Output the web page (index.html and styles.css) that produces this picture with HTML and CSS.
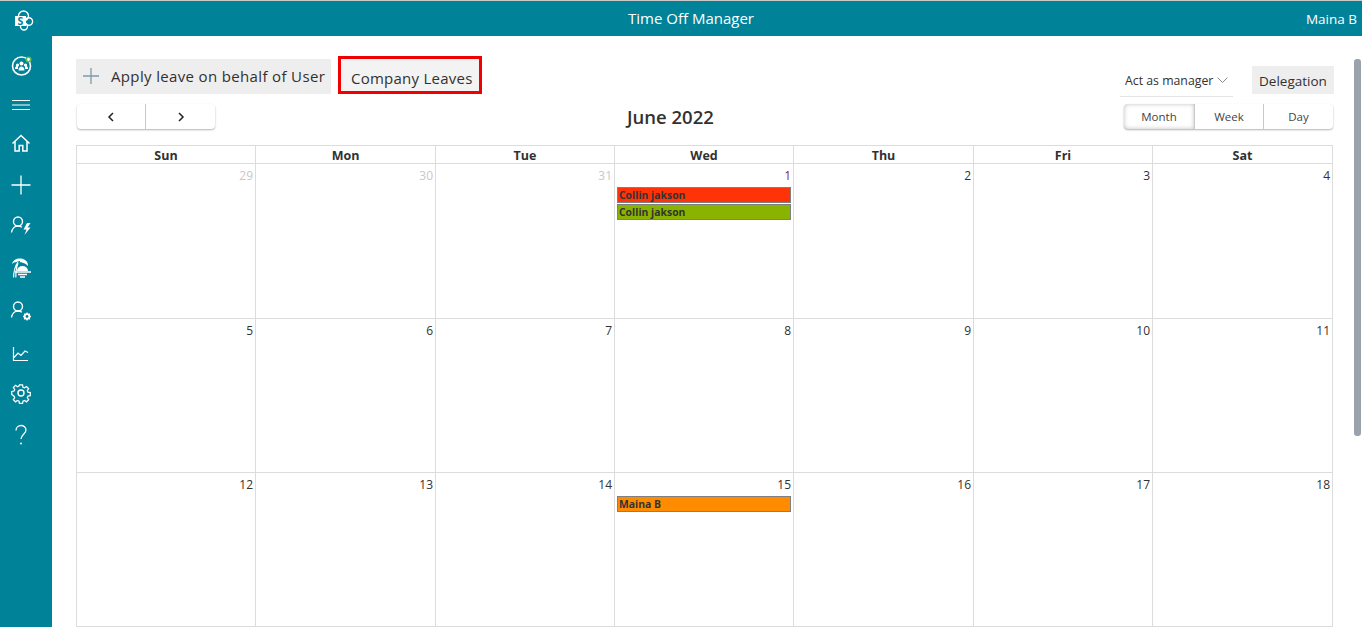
FILE: index.html
```html
<!DOCTYPE html>
<html lang="en">
<head>
    <meta charset="UTF-8">
    <meta name="viewport" content="width=device-width, initial-scale=1.0">
    <title>Time Off Manager</title>
    <link rel="stylesheet" href="styles.css">
</head>
<body>
    <header class="topbar">
        <svg class="logo" width="20" height="22" viewBox="0 0 20 22" fill="none" stroke="#fff" stroke-width="1.4">
            <circle cx="9.500" cy="6" r="5"/>
            <circle cx="14.800" cy="11.500" r="3.800"/>
            <circle cx="10" cy="16.500" r="3.500"/>
            <rect x="1" y="6" width="11" height="10" fill="#fff" stroke="none"/>
            <text x="6.500" y="14.500" class="logo-letter">S</text>
        </svg>
        <div class="app-title">Time Off Manager</div>
        <div class="user-name">Maina B</div>
    </header>

    <div class="main">
        <nav class="sidebar">
            <svg class="nav-icon" width="24" height="24" viewBox="0 0 24 24" fill="none" stroke="#fff">
                <circle cx="12.500" cy="13" r="9" stroke-width="1.600"/>
                <circle cx="12.500" cy="10.500" r="2" fill="#fff" stroke="none"/>
                <circle cx="8.500" cy="12" r="1.600" fill="#fff" stroke="none"/>
                <circle cx="16.500" cy="12" r="1.600" fill="#fff" stroke="none"/>
                <path d="M9.500 17.500c0-5.500 6-5.500 6 0z" fill="#fff" stroke="none"/>
                <path d="M6 16c0-2.500 1-3 3-3v3zM19 16c0-2.500-1-3-3-3v3z" fill="#fff" stroke="none"/>
                <circle cx="19.500" cy="6.500" r="2.200" stroke="#5cc04a" stroke-width="1.600" fill="#fff"/>
            </svg>
            <svg class="nav-icon" width="20" height="20" viewBox="0 0 20 20" stroke="#fff" stroke-width="1">
                <path d="M1 5.500h18M1 10h18M1 14.500h18"/>
            </svg>
            <svg class="nav-icon" width="20" height="20" viewBox="0 0 20 20" fill="none" stroke="#fff" stroke-width="1.500">
                <path d="M1.500 10.500L10 2.500l8.500 8M4 8.500v9.500h4.200v-5.500h3.600V18H16V8.500"/>
            </svg>
            <svg class="nav-icon" width="22" height="22" viewBox="0 0 22 22" stroke="#fff" stroke-width="1.300">
                <path d="M1.500 11h19M11 1.500v19"/>
            </svg>
            <svg class="nav-icon" width="22" height="22" viewBox="0 0 22 22" fill="none" stroke="#fff" stroke-width="1.400">
                <circle cx="8" cy="6.500" r="4.500"/>
                <path d="M1.500 17.500c.5-3.500 3-6.500 6.500-6.500 1.500 0 2.800.4 3.800 1.200"/>
                <path d="M17 8l-3.500 6.500h3l-2 5.500 6-7.500h-3L20.500 8z" fill="#fff" stroke="none"/>
            </svg>
            <svg class="nav-icon" width="22" height="22" viewBox="0 0 22 22" fill="none" stroke="#fff" stroke-width="1.300">
                <path d="M2 7C3 2 10 0 15 3c2 1 3 3 3 6-3-3-6-4-9-4S4 5 2 7z" fill="#fff" stroke="none"/>
                <path d="M5 7c1-1.500 3-2.500 5-2.500" stroke="#008299" stroke-width="1"/>
                <path d="M8 5C5 9 3.800 14 3.500 20.500M8 6c-1.500 4-2.200 9-2.200 14.500" stroke-width="1.200"/>
                <path d="M7 14a5.500 5 0 0 1 11 0z" fill="#fff" stroke="none"/>
                <path d="M5 15h16" stroke-width="1.500"/>
                <path d="M8 17.500h9M10 20h5" stroke-width="1.300"/>
            </svg>
            <svg class="nav-icon" width="22" height="22" viewBox="0 0 22 22" fill="none" stroke="#fff">
                <circle cx="8" cy="6.500" r="4.500" stroke-width="1.400"/>
                <path d="M1.500 17.500c.5-3.500 3-6.500 6.500-6.500 1.500 0 2.800.4 3.800 1.200" stroke-width="1.400"/>
                <circle cx="17" cy="16.500" r="2.300" stroke-width="1.800"/>
                <path d="M17 12.500v1.500M17 19v1.500M13 16.500h1.500M19.500 16.500H21M14.200 13.700l1 1M18.800 18.300l1 1M14.200 19.300l1-1M18.800 14.700l1-1" stroke-width="1.300"/>
            </svg>
            <svg class="nav-icon" width="20" height="20" viewBox="0 0 20 20" fill="none" stroke="#fff" stroke-width="1.200">
                <path d="M2.500 4v13.500H17"/>
                <path d="M3 14.500l4-4.500 3 2.500 4-4.500 3 1.500"/>
            </svg>
            <svg class="nav-icon" width="22" height="22" viewBox="0 0 22 22" fill="none" stroke="#fff" stroke-width="1.400">
                <circle cx="11" cy="11" r="3"/>
                <path d="M9.300 2h3.400l.5 2.600 1.700.7 2.200-1.500 2.400 2.400-1.500 2.200.7 1.700 2.600.5v3.400l-2.600.5-.7 1.700 1.500 2.200-2.400 2.400-2.200-1.500-1.700.7-.5 2.600H9.300l-.5-2.600-1.700-.7-2.200 1.500-2.400-2.400 1.500-2.200-.7-1.700L.7 12.700V9.300l2.600-.5.700-1.700-1.500-2.200 2.400-2.400 2.200 1.500 1.700-.7z" transform="translate(1.100 1.100) scale(.9)"/>
            </svg>
            <svg class="nav-icon" width="20" height="22" viewBox="0 0 20 22" fill="none" stroke="#fff" stroke-width="1.300">
                <path d="M5 6.500C5 3.500 7.300 1.500 10 1.500s5 2 5 4.500c0 4-5 4.500-5 9"/>
                <circle cx="10" cy="19.500" r="1" fill="#fff" stroke="none"/>
            </svg>
        </nav>

        <section class="content">
            <div class="toolbar">
                <div class="toolbar-left">
                    <button class="btn btn-apply">
                        <svg width="18" height="18" viewBox="0 0 18 18" stroke="#7d9aab" stroke-width="1.300">
                            <path d="M1 9h16M9 1v16"/>
                        </svg>
                        <span>Apply leave on behalf of User</span>
                    </button>
                    <button class="btn btn-company">Company Leaves</button>
                </div>
                <div class="toolbar-right">
                    <div class="role-select">
                        <span>Act as manager</span>
                        <svg width="11" height="6" viewBox="0 0 11 6" fill="none" stroke="#8a8886" stroke-width="1">
                            <path d="M.5.500l5 5 5-5"/>
                        </svg>
                    </div>
                    <button class="btn btn-delegation">Delegation</button>
                </div>
            </div>

            <div class="cal-head">
                <div class="btn-group nav-group">
                    <button>
                        <svg width="8" height="10" viewBox="0 0 8 10" fill="none" stroke="#222" stroke-width="1.500"><path d="M6 1L2 5l4 4"/></svg>
                    </button>
                    <button>
                        <svg width="8" height="10" viewBox="0 0 8 10" fill="none" stroke="#222" stroke-width="1.500"><path d="M2 1l4 4-4 4"/></svg>
                    </button>
                </div>
                <h2 class="cal-title">June 2022</h2>
                <div class="btn-group view-group">
                    <button class="active">Month</button>
                    <button>Week</button>
                    <button>Day</button>
                </div>
            </div>

            <div class="calendar">
                <div class="day-name">Sun</div>
                <div class="day-name">Mon</div>
                <div class="day-name">Tue</div>
                <div class="day-name">Wed</div>
                <div class="day-name">Thu</div>
                <div class="day-name">Fri</div>
                <div class="day-name">Sat</div>

                <div class="cell"><div class="num muted">29</div></div>
                <div class="cell"><div class="num muted">30</div></div>
                <div class="cell"><div class="num muted">31</div></div>
                <div class="cell">
                    <div class="num today">1</div>
                    <div class="event ev-red">Collin jakson</div>
                    <div class="event ev-green">Collin jakson</div>
                </div>
                <div class="cell"><div class="num">2</div></div>
                <div class="cell"><div class="num">3</div></div>
                <div class="cell"><div class="num">4</div></div>

                <div class="cell"><div class="num">5</div></div>
                <div class="cell"><div class="num">6</div></div>
                <div class="cell"><div class="num">7</div></div>
                <div class="cell"><div class="num">8</div></div>
                <div class="cell"><div class="num">9</div></div>
                <div class="cell"><div class="num">10</div></div>
                <div class="cell"><div class="num">11</div></div>

                <div class="cell"><div class="num">12</div></div>
                <div class="cell"><div class="num">13</div></div>
                <div class="cell"><div class="num">14</div></div>
                <div class="cell">
                    <div class="num">15</div>
                    <div class="event ev-orange">Maina B</div>
                </div>
                <div class="cell"><div class="num">16</div></div>
                <div class="cell"><div class="num">17</div></div>
                <div class="cell"><div class="num">18</div></div>
            </div>
        </section>

        <div class="scroll-track"><div class="scroll-thumb"></div></div>
    </div>
</body>
</html>
```

FILE: styles.css
```css
* {
    box-sizing: border-box;
}

html,
body {
    height: 100%;
}

body {
    margin: 0;
    font-family: "Open Sans", "Noto Sans", Arial, sans-serif;
    color: #323130;
    background-color: white;
    overflow: hidden;
}

button {
    font-family: inherit;
    color: inherit;
}

.topbar {
    height: 36px;
    border-top: 1px solid #c8c8c8;
    background-color: #008299;
    color: white;
    display: flex;
    align-items: center;
    justify-content: center;
    position: relative;
}

.logo {
    position: absolute;
    left: 14px;
    top: 9px;
}

.logo-letter {
    font-size: 10.5px;
    font-weight: 700;
    fill: #008299;
    stroke: none;
    text-anchor: middle;
}

.app-title {
    font-size: 15px;
    margin-left: 20px;
    margin-bottom: 1px;
}

.user-name {
    position: absolute;
    right: 5px;
    top: 9px;
    font-size: 13.5px;
}

.main {
    display: flex;
    height: 591px;
}

.sidebar {
    width: 52px;
    flex-shrink: 0;
    background-color: #008299;
    display: flex;
    flex-direction: column;
    align-items: center;
    padding: 17px 10px 0 0;
}

.nav-icon {
    display: block;
    margin-bottom: 19px;
}

/* icons are not evenly spaced in the rail */
.nav-icon:nth-child(-n+2) {
    margin-bottom: 18px;
}

.nav-icon:nth-child(3),
.nav-icon:nth-child(6),
.nav-icon:nth-child(7) {
    margin-bottom: 21px;
}

.nav-icon:nth-child(5),
.nav-icon:nth-child(9) {
    margin-bottom: 20px;
}

.content {
    flex: 1;
    padding: 20px 29px 0 24px;
    min-width: 0;
}

.toolbar {
    display: flex;
    justify-content: space-between;
    height: 48px;
}

.toolbar-left {
    display: flex;
    align-items: flex-start;
    gap: 7px;
}

.toolbar-right {
    display: flex;
    align-items: flex-start;
    margin-right: -1px;
}

.btn {
    border: none;
    background-color: #eeeeee;
    padding: 0;
    display: flex;
    align-items: center;
}

.btn-apply {
    margin-top: 3px;
    width: 255px;
    height: 35px;
    padding: 0 0 2px 6px;
    gap: 11px;
    font-size: 15px;
    font-weight: 500;
    letter-spacing: 0.35px;
}

.btn-company {
    width: 144px;
    height: 38px;
    border: 3px solid #f00000;
    background-color: #f3f3f3;
    padding: 6px 0 0 10px;
    font-size: 15px;
    font-weight: 500;
    letter-spacing: 0.25px;
}

.role-select {
    width: 113px;
    height: 33px;
    margin: 8px 19px 0 0;
    padding: 0 0 0 5px;
    border-bottom: 1px solid #e4e4e4;
    display: flex;
    align-items: center;
    gap: 4px;
    font-size: 12.3px;
}

.btn-delegation {
    margin-top: 10px;
    width: 82px;
    height: 28px;
    padding-top: 2px;
    justify-content: center;
    font-size: 13.5px;
}

.cal-head {
    display: flex;
    justify-content: space-between;
    align-items: center;
    height: 25px;
    margin-bottom: 16px;
    position: relative;
}

.btn-group {
    display: flex;
    height: 25px;
    border-radius: 4px;
    box-shadow: 0 1px 2px rgba(0, 0, 0, 0.3);
    background-color: white;
}

.btn-group button {
    border: none;
    border-right: 1px solid #c8c8c8;
    background: none;
    padding: 0;
    height: 100%;
    display: flex;
    align-items: center;
    justify-content: center;
}

.btn-group button:last-child {
    border-right: none;
}

.nav-group {
    width: 138px;
    margin-left: 1px;
}

.nav-group button {
    width: 50%;
}

.view-group {
    width: 209px;
}

.view-group button {
    width: 69px;
    font-size: 11.5px;
    color: #444;
}

.view-group .active {
    width: 71px;
    box-shadow: inset 0 0 4px rgba(0, 0, 0, 0.25);
    border-radius: 4px 0 0 4px;
}

.cal-title {
    margin: 0;
    font-size: 18.5px;
    font-weight: 600;
    position: absolute;
    left: 551px;
    top: 0;
}

.calendar {
    display: grid;
    grid-template-columns: 179px 180px 179px 179px 180px 179px 180px;
    grid-template-rows: 18px 155px 154px 154px;
    border-top: 1px solid #dcdcdc;
    border-left: 1px solid #dcdcdc;
    width: 1257px;
}

.day-name {
    border-right: 1px solid #dcdcdc;
    border-bottom: 1px solid #dcdcdc;
    text-align: center;
    font-size: 12.5px;
    font-weight: 700;
    line-height: 19px;
}

.cell {
    border-right: 1px solid #dcdcdc;
    border-bottom: 1px solid #dcdcdc;
    padding: 3px 2px 0 2px;
}

.num {
    text-align: right;
    font-size: 12px;
    line-height: 17px;
    margin-bottom: 3px;
}

.num.muted {
    color: #c8c8c8;
}

.num.today {
    color: #7a1f4a;
}

.event {
    height: 16px;
    margin-bottom: 1px;
    border: 1px solid #808080;
    padding-left: 1px;
    font-size: 10.4px;
    font-weight: 700;
    line-height: 14px;
    color: #333;
}

.ev-red {
    background-color: #ff3308;
}

.ev-green {
    background-color: #8ab300;
}

.ev-orange {
    background-color: #ff8c00;
}

.scroll-track {
    position: absolute;
    right: 0;
    top: 59px;
    width: 10px;
}

.scroll-thumb {
    width: 7px;
    height: 377px;
    margin-left: 2px;
    border-radius: 3px;
    background-color: #9aa3ab;
}
```
